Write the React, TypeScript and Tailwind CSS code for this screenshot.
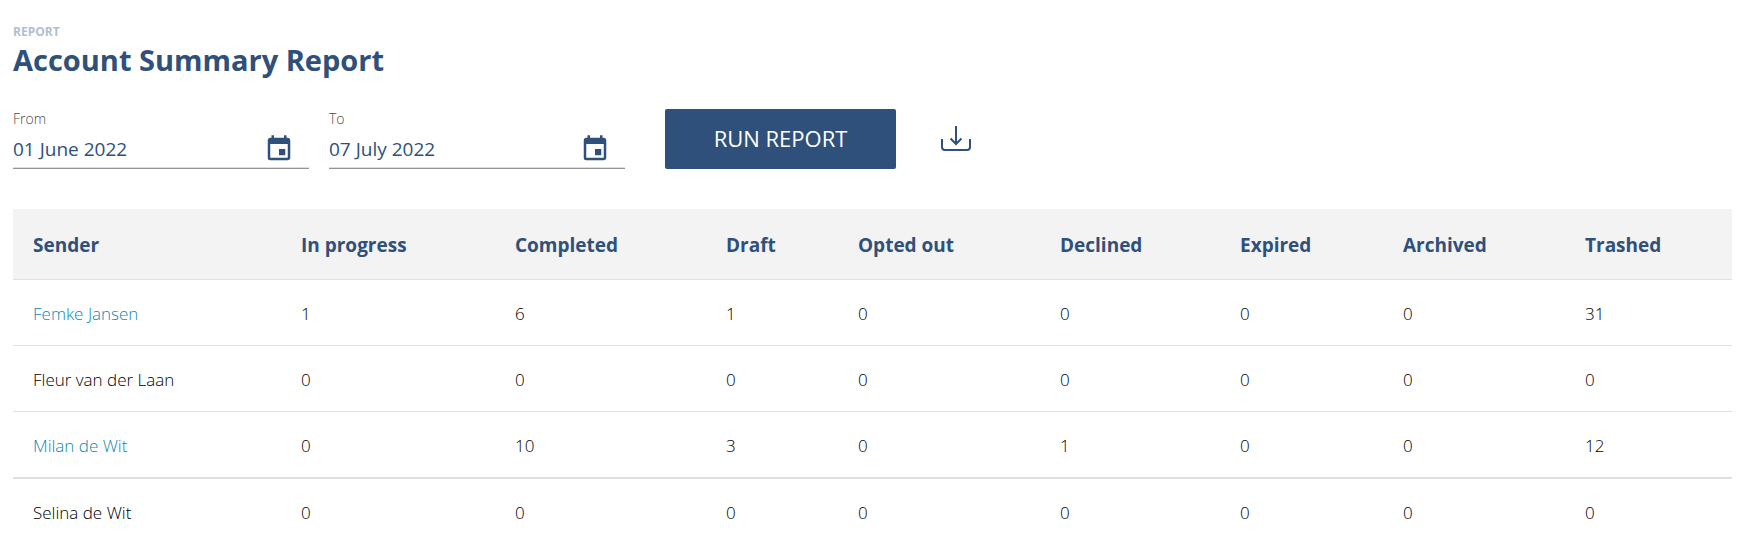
import { MdEvent } from 'react-icons/md';

const columns = [
  { name: "Sender", width: "w-[268px]" },
  { name: "In progress", width: "w-[214px]" },
  { name: "Completed", width: "w-[211px]" },
  { name: "Draft", width: "w-[132px]" },
  { name: "Opted out", width: "w-[202px]" },
  { name: "Declined", width: "w-[180px]" },
  { name: "Expired", width: "w-[163px]" },
  { name: "Archived", width: "w-[182px]" },
  { name: "Trashed", width: "w-[167px]" }
];

const senders = [
  { name: "Femke Jansen", link: true, counts: [1, 6, 1, 0, 0, 0, 0, 31], row: "h-[66px] *:border-b" },
  { name: "Fleur van der Laan", link: false, counts: [0, 0, 0, 0, 0, 0, 0, 0], row: "h-[66px] *:border-b" },
  { name: "Milan de Wit", link: true, counts: [0, 10, 3, 0, 1, 0, 0, 12], row: "h-[67px] *:border-b-2" },
  { name: "Selina de Wit", link: false, counts: [0, 0, 0, 0, 0, 0, 0, 0], row: "h-[66px]" }
];

const DateField = ({ id, label, value }: { id: string; label: string; value: string }) => (
  <div className="w-[296px] border-b border-[#949494]">
    <label htmlFor={id} className="block text-sm leading-6 font-light text-[#4a4a4a]">{label}</label>
    <div className="flex items-center h-[37px] pr-[15px] border-b border-[#dedede]">
      <input
        id={id}
        type="text"
        defaultValue={value}
        className="flex-1 min-w-0 text-[19px] text-[#2f507a] bg-transparent outline-none"
      />
      <button type="button" aria-label={`Choose ${label} date`} className="text-[#2f507a]">
        <MdEvent size={30} />
      </button>
    </div>
  </div>
);

const DownloadIcon = () => (
  <svg width="30" height="26" viewBox="0 0 30 26" fill="none" stroke="#2f507a" strokeWidth="2">
    <path d="M15 0v18M9.5 12.5 15 18l5.5-5.5" />
    <path d="M1 13v8q0 3 3 3h22q3 0 3-3v-8" />
  </svg>
);

const App = () => {
  return (
    <div className="min-h-screen bg-white pl-[13px] pr-[26px] pt-6 font-['Open_Sans','Noto_Sans',sans-serif]">
      {/* Heading */}
      <p className="text-xs leading-4 font-bold text-[#b0bfd0]">REPORT</p>
      <h1 className="text-[29px] leading-10 font-bold text-[#2f507a]">Account Summary Report</h1>

      {/* Filters */}
      <div className="flex flex-wrap items-end mt-[27px]">
        <DateField id="from" label="From" value="01 June 2022" />
        <div className="ml-5">
          <DateField id="to" label="To" value="07 July 2022" />
        </div>
        <button type="button" className="ml-10 w-[231px] h-[60px] pb-0.5 rounded-xs bg-[#2f507a] text-[22px] text-white">
          RUN REPORT
        </button>
        <button type="button" aria-label="Download report" className="ml-[45px] h-[60px] flex items-center">
          <DownloadIcon />
        </button>
      </div>

      {/* Results */}
      <table className="w-full table-fixed mt-10 text-left border-separate border-spacing-0">
        <thead>
          <tr className="h-[71px] bg-[#f3f3f3]">
            {columns.map((column) => (
              <th
                key={column.name}
                className={`${column.width} px-5 pt-0.5 border-b border-[#e0e0e0] text-[19px] font-bold text-[#2f507a] whitespace-nowrap`}
              >
                {column.name}
              </th>
            ))}
          </tr>
        </thead>
        <tbody>
          {senders.map((sender) => (
            <tr key={sender.name} className={`${sender.row} text-[17px] font-light text-black`}>
              <td className="px-5 pt-0.5 border-[#e0e0e0] whitespace-nowrap">
                {sender.link ? <a href="#" className="text-[#0f86b5]">{sender.name}</a> : sender.name}
              </td>
              {sender.counts.map((count, index) => (
                <td key={index} className="px-5 pt-0.5 border-[#e0e0e0]">{count}</td>
              ))}
            </tr>
          ))}
        </tbody>
      </table>
    </div>
  );
};

export default App;
